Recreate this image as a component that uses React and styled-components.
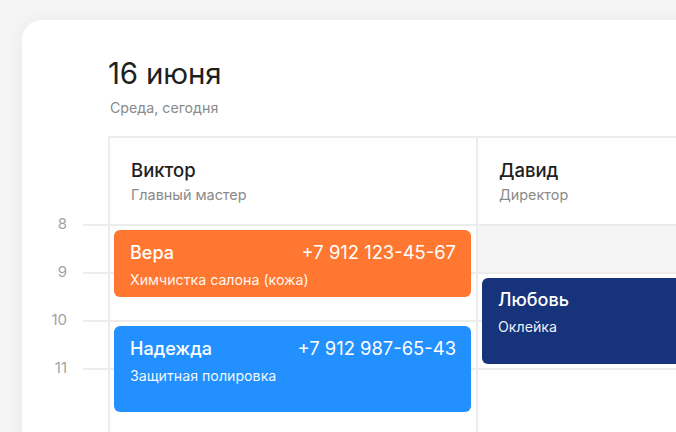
import React from "react";
import styled, { createGlobalStyle } from "styled-components";

const GlobalStyle = createGlobalStyle`
  html, body {
    margin: 0;
    padding: 0;
    background: #f5f5f5;
    overflow: hidden;
  }
  body {
    font-family: Inter, "Noto Sans", "Liberation Sans", sans-serif;
    -webkit-font-smoothing: antialiased;
  }
`;

const HOUR = 48;
const FIRST_HOUR = 8;

const Page = styled.div`
  width: 676px;
  height: 432px;
  box-sizing: border-box;
  padding: 20px 0 0 22px;
  overflow: hidden;
`;

const Card = styled.div`
  width: 700px;
  height: 460px;
  background: #ffffff;
  border-radius: 20px 0 0 0;
  box-shadow: 0 0 18px rgba(0, 0, 0, 0.05);
  padding: 35px 0 0 86px;
  box-sizing: border-box;
  overflow: hidden;
`;

const Title = styled.h1`
  margin: 0;
  font-size: 29.5px;
  line-height: 36px;
  font-weight: 400;
  color: #1f1f1f;
  letter-spacing: -0.2px;
`;

const Subtitle = styled.div`
  margin: 8px 0 0 2px;
  font-size: 14.2px;
  line-height: 18px;
  color: #8a8a8a;
`;

const Schedule = styled.div`
  margin-top: 19px;
  margin-left: -86px;
  display: flex;
  align-items: flex-start;
`;

const Gutter = styled.div`
  width: 86px;
  flex: none;
  padding-top: 88px;
`;

const GutterSlot = styled.div`
  height: ${HOUR}px;
  display: flex;
  align-items: flex-start;
`;

const HourLabel = styled.span`
  width: 45px;
  margin-top: -10px;
  text-align: right;
  font-size: 15px;
  line-height: 20px;
  color: #a3a3a3;
`;

const Tick = styled.span`
  flex: 1;
  margin-left: 16px;
  border-top: 2px solid #ececec;
`;

const Columns = styled.div`
  display: flex;
  flex: 1;
`;

const Column = styled.div`
  width: ${(p) => p.$width}px;
  flex: none;
  border-left: 2px solid #ececec;
  box-sizing: border-box;
`;

const Header = styled.div`
  height: 88px;
  box-sizing: border-box;
  border-top: 2px solid #ececec;
  padding: 21px 0 0 21px;
`;

const Name = styled.div`
  font-size: 18.5px;
  line-height: 22px;
  font-weight: 500;
  color: #1f1f1f;
`;

const Role = styled.div`
  margin-top: 5px;
  font-size: 14.4px;
  line-height: 18px;
  color: #8a8a8a;
`;

const Body = styled.div`
  position: relative;
`;

const Slot = styled.div`
  height: ${HOUR}px;
  box-sizing: border-box;
  border-top: 2px solid #ececec;
  background: ${(p) => (p.$busy ? "#f5f5f5" : "transparent")};
`;

const Tail = styled.div`
  height: ${HOUR}px;
`;

const Event = styled.div`
  position: absolute;
  left: 4px;
  right: 5px;
  box-sizing: border-box;
  border-radius: 6px;
  background: ${(p) => p.$color};
  color: #ffffff;
  padding: 11px 15px 0 16px;
`;

const EventTop = styled.div`
  display: flex;
  justify-content: space-between;
  align-items: baseline;
  font-size: 18px;
  line-height: 22px;
  font-weight: 500;
`;

const Phone = styled.span`
  font-size: 18.4px;
  font-weight: 400;
`;

const EventNote = styled.div`
  margin-top: 7px;
  font-size: 14.2px;
  line-height: 18px;
  color: rgba(255, 255, 255, 0.95);
`;

const hours = [8, 9, 10, 11];

const masters = [
  {
    name: "Виктор",
    role: "Главный мастер",
    width: 368,
    busy: [],
    events: [
      { client: "Вера", phone: "+7 912 123-45-67", note: "Химчистка салона (кожа)", start: 8, end: 9.5, color: "#ff7730" },
      { client: "Надежда", phone: "+7 912 987-65-43", note: "Защитная полировка", start: 10, end: 11.9, color: "#2290ff" },
    ],
  },
  {
    name: "Давид",
    role: "Директор",
    width: 260,
    busy: [8],
    events: [
      { client: "Любовь", note: "Оклейка", start: 9, end: 10.9, color: "#16337b" },
    ],
  },
];

export default function App() {
  return (
    <>
      <GlobalStyle />
      <Page>
        <Card>
          <Title>16 июня</Title>
          <Subtitle>Среда, сегодня</Subtitle>
          <Schedule>
            <Gutter>
              {hours.map((h) => (
                <GutterSlot key={h}>
                  <HourLabel>{h}</HourLabel>
                  <Tick />
                </GutterSlot>
              ))}
            </Gutter>
            <Columns>
              {masters.map((m) => (
                <Column key={m.name} $width={m.width}>
                  <Header>
                    <Name>{m.name}</Name>
                    <Role>{m.role}</Role>
                  </Header>
                  <Body>
                    {hours.map((h) => (
                      <Slot key={h} $busy={m.busy.includes(h)} />
                    ))}
                    <Tail />
                    {m.events.map((e) => (
                      <Event
                        key={e.client}
                        $color={e.color}
                        style={{
                          top: (e.start - FIRST_HOUR) * HOUR + 6,
                          height: (e.end - e.start) * HOUR - 5,
                        }}
                      >
                        <EventTop>
                          <span>{e.client}</span>
                          {e.phone && <Phone>{e.phone}</Phone>}
                        </EventTop>
                        <EventNote>{e.note}</EventNote>
                      </Event>
                    ))}
                  </Body>
                </Column>
              ))}
            </Columns>
          </Schedule>
        </Card>
      </Page>
    </>
  );
}
